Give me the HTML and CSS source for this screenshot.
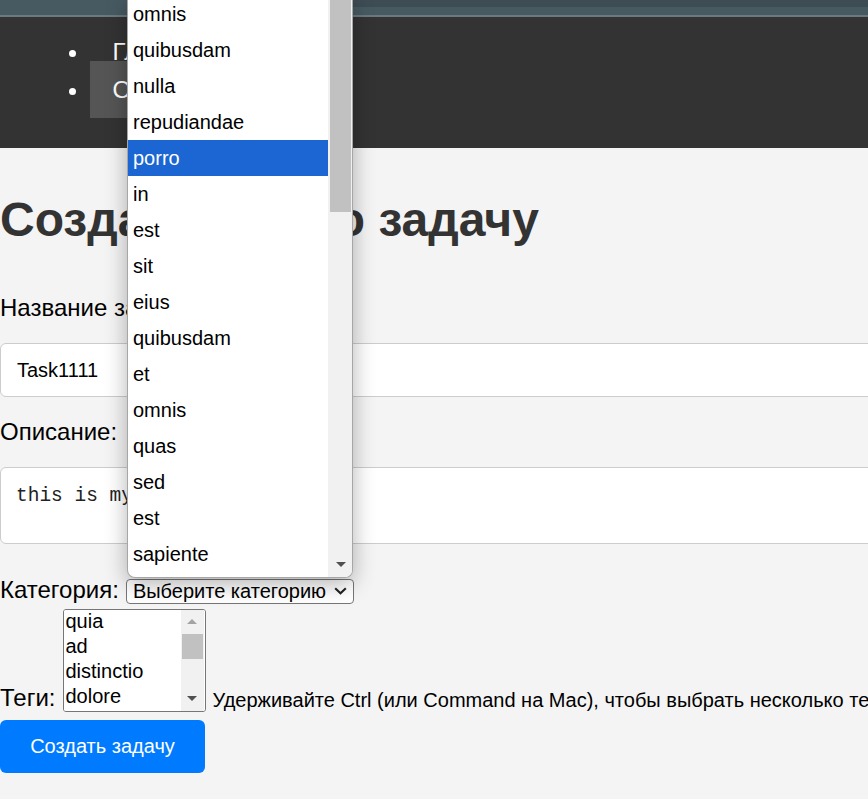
FILE: index.html
```html
<!DOCTYPE html>
<html lang="ru">
<head>
<meta charset="utf-8">
<title>Создать новую задачу</title>
<link rel="stylesheet" href="styles.css">
</head>
<body>
<div class="topstrip"></div>
<header class="site-header">
  <nav>
    <ul class="nav-list">
      <li><a href="#" class="nav-link">Главная</a></li>
      <li><a href="#" class="nav-link is-hover">О нас</a></li>
    </ul>
  </nav>
</header>
<main class="content">
  <h1 class="page-title">Создать новую задачу</h1>
  <form class="task-form">
    <label class="field-label" for="title">Название задачи:</label>
    <input class="text-input" id="title" type="text" value="Task1111">
    <label class="field-label" for="desc">Описание:</label>
    <textarea class="text-area" id="desc">this is my description</textarea>
    <div class="cat-row">
      <label for="cat">Категория:</label>
      <select class="cat-select" id="cat"><option>Выберите категорию</option></select>
    </div>
    <div class="tags-row">
      <label for="tags">Теги:</label>
      <div class="tags-box">
        <select class="tags-select" id="tags" multiple>
          <option>quia</option>
          <option>ad</option>
          <option>distinctio</option>
          <option>dolore</option>
          <option>voluptatem</option>
          <option>rerum</option>
          <option>aut</option>
          <option>omnis</option>
          <option>nihil</option>
        </select>
        <div class="list-scroll" aria-hidden="true">
          <span class="sb-btn sb-up"></span>
          <span class="sb-thumb"></span>
          <span class="sb-btn sb-down"></span>
        </div>
      </div>
      <span class="hint">Удерживайте Ctrl (или Command на Mac), чтобы выбрать несколько тегов.</span>
    </div>
    <button type="button" class="submit-btn">Создать задачу</button>
  </form>
</main>
<div class="dropdown-popup">
  <ul class="popup-list">
    <li class="popup-item">omnis</li>
    <li class="popup-item">quibusdam</li>
    <li class="popup-item">nulla</li>
    <li class="popup-item">repudiandae</li>
    <li class="popup-item is-active">porro</li>
    <li class="popup-item">in</li>
    <li class="popup-item">est</li>
    <li class="popup-item">sit</li>
    <li class="popup-item">eius</li>
    <li class="popup-item">quibusdam</li>
    <li class="popup-item">et</li>
    <li class="popup-item">omnis</li>
    <li class="popup-item">quas</li>
    <li class="popup-item">sed</li>
    <li class="popup-item">est</li>
    <li class="popup-item">sapiente</li>
  </ul>
  <div class="popup-scroll">
    <div class="popup-thumb"></div>
    <div class="popup-arrow"></div>
  </div>
</div>
</body>
</html>
```
FILE: styles.css
```css
html {
  overflow: hidden;
}
body {
  margin: 0;
  position: relative;
  background: #f4f4f4;
  font-family: "Liberation Sans", Arial, sans-serif;
  font-size: 24px;
  color: #000;
}
.topstrip {
  height: 17px;
  background:
    linear-gradient(#6b7a80, #6b7a80) 0 15px / 100% 2px no-repeat,
    linear-gradient(#3e4c54, #3e4c54) 353px 0 / 100% 7px no-repeat,
    #475a62;
}
.site-header {
  background: #333;
  padding: 16px 0 40px;
}
.nav-list {
  margin: 0;
  padding-left: 90px;
  color: #fff;
}
.nav-list li {
  line-height: 37.5px;
}
.nav-link {
  color: #fff;
  text-decoration: none;
  padding: 15px 22.5px;
}
.nav-link.is-hover {
  background: #555;
}
.page-title {
  font-size: 48px;
  font-weight: bold;
  color: #333;
  margin: 44px 0 47px;
}
.task-form {
  display: flex;
  flex-direction: column;
  align-items: flex-start;
}
.field-label {
  display: block;
  margin-bottom: 21px;
}
.text-input {
  box-sizing: border-box;
  width: 900px;
  height: 54px;
  padding: 0 16px;
  border: 1px solid #ccc;
  border-radius: 6px;
  background: #fff;
  font-family: "Liberation Sans", Arial, sans-serif;
  font-size: 20px;
  color: #000;
  margin: 0 0 21px;
}
.text-area {
  box-sizing: border-box;
  width: 900px;
  height: 77px;
  padding: 17px 15px 13px;
  border: 1px solid #ccc;
  border-radius: 6px;
  background: #fff;
  font-family: "Liberation Mono", "Courier New", monospace;
  font-size: 19.5px;
  color: #222;
  resize: none;
  margin: 0 0 31.5px;
}
.cat-row {
  display: flex;
  align-items: baseline;
  gap: 7px;
}
.cat-select {
  -webkit-appearance: none;
  appearance: none;
  box-sizing: border-box;
  width: 228px;
  height: 25px;
  padding: 0 24px 0 6px;
  font-family: "Liberation Sans", Arial, sans-serif;
  font-size: 20px;
  line-height: 23px;
  color: #000;
  background: #fff url("data:image/svg+xml,%3Csvg xmlns='http://www.w3.org/2000/svg' width='13' height='8'%3E%3Cpath d='M1.2 1.2L6.5 6.3L11.8 1.2' fill='none' stroke='%23222' stroke-width='2.1'/%3E%3C/svg%3E") no-repeat right 6px center;
  border: 1px solid #767676;
  border-radius: 4px;
}
.tags-row {
  display: flex;
  align-items: flex-end;
  margin-top: 5px;
  white-space: nowrap;
}
.tags-box {
  position: relative;
  margin: 0 7px;
}
.tags-select {
  display: block;
  box-sizing: border-box;
  width: 143px;
  height: 103px;
  margin: 0;
  font-family: "Liberation Sans", Arial, sans-serif;
  font-size: 20px;
  color: #000;
  background: #fff;
  border: 1px solid #767676;
  border-radius: 3px;
}
.list-scroll {
  position: absolute;
  top: 1px;
  right: 2px;
  bottom: 1px;
  width: 23px;
  background: #f1f1f1;
  display: flex;
  flex-direction: column;
}
.sb-btn {
  height: 23px;
  display: flex;
  align-items: center;
  justify-content: center;
}
.sb-up::before {
  content: "";
  border-left: 5px solid transparent;
  border-right: 5px solid transparent;
  border-bottom: 5px solid #a3a3a3;
}
.sb-down {
  margin-top: auto;
  height: 20px;
  align-items: flex-start;
  padding-top: 5px;
  box-sizing: border-box;
}
.sb-down::before {
  content: "";
  border-left: 5px solid transparent;
  border-right: 5px solid transparent;
  border-top: 5px solid #505050;
}
.sb-thumb {
  margin: 1px 1px 0 1px;
  height: 25px;
  background: #c1c1c1;
}
.hint {
  font-size: 20px;
}
.submit-btn {
  margin-top: 8px;
  width: 205px;
  height: 53px;
  background: #007bff;
  color: #fff;
  border: 0;
  border-radius: 6px;
  font-family: "Liberation Sans", Arial, sans-serif;
  font-size: 20px;
}
.dropdown-popup {
  position: absolute;
  left: 127px;
  top: -4px;
  width: 224px;
  height: 581px;
  display: flex;
  overflow: hidden;
  background: #fff;
  border: 1px solid #a6a6a6;
  border-top: 0;
  border-radius: 0 0 8px 8px;
  box-shadow: 0 6px 22px rgba(0, 0, 0, 0.3);
}
.popup-list {
  width: 200px;
  margin: 0;
  padding: 0;
  list-style: none;
}
.popup-item {
  height: 36px;
  line-height: 36px;
  padding-left: 5px;
  font-size: 20px;
  color: #000;
}
.popup-item.is-active {
  background: #1b66d2;
  color: #fff;
}
.popup-scroll {
  width: 24px;
  background: #f1f1f1;
  display: flex;
  flex-direction: column;
}
.popup-thumb {
  margin-left: 2px;
  width: 21px;
  height: 216px;
  background: #c1c1c1;
}
.popup-arrow {
  margin: auto 0 10px 8px;
  width: 0;
  height: 0;
  border-left: 5px solid transparent;
  border-right: 5px solid transparent;
  border-top: 5px solid #505050;
}
```
